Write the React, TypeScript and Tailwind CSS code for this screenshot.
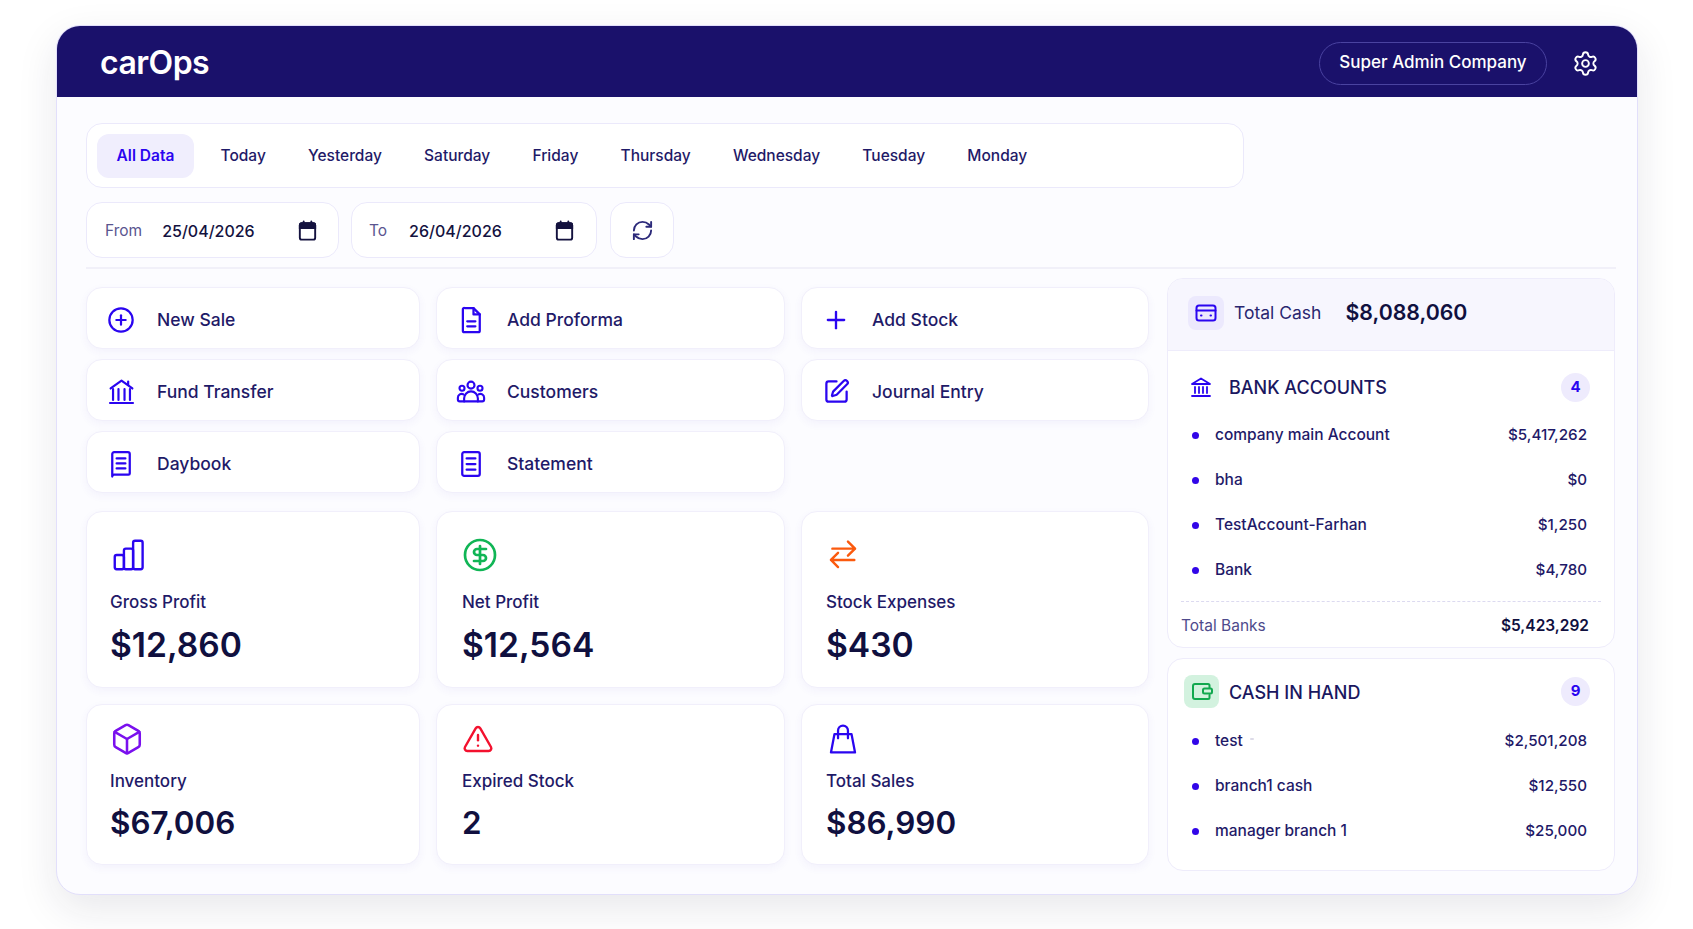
import { CircleDollarSign, Box, TriangleAlert, Plus, CirclePlus, SquarePen, RefreshCw, Settings } from "lucide-react";
import type { ReactNode } from "react";

const tabs = ["Today", "Yesterday", "Saturday", "Friday", "Thursday", "Wednesday", "Tuesday", "Monday"];

const BLUE = "#2a05f0";

function Glyph({ size, children, color = BLUE, sw = 2 }: { size: number; children: ReactNode; color?: string; sw?: number }) {
  return (
    <svg width={size} height={size} viewBox="0 0 24 24" fill="none" stroke={color} strokeWidth={sw} strokeLinecap="round" strokeLinejoin="round">
      {children}
    </svg>
  );
}

const FundIcon = () => (
  <Glyph size={29} sw={1.8}>
    <path d="M3 9.500 12 3l9 6.500" />
    <path d="M17.500 6.500V3.800" />
    <path d="M5 10v9M9.500 10v9M14.500 10v9M19 10v9" />
    <path d="M2.500 21.500h19" />
  </Glyph>
);

const DocIcon = () => (
  <Glyph size={30} sw={1.8}>
    <path d="M7 2.500h7l5 5v13a1.200 1.200 0 0 1-1.200 1.200H6.700a1.200 1.200 0 0 1-1.200-1.200v-17a1 1 0 0 1 1.500-1z" />
    <path d="M14 2.500v5h5" />
    <path d="M9 13h6.500M9 17h6.500" />
  </Glyph>
);

const PeopleIcon = () => (
  <Glyph size={30} sw={1.7}>
    <circle cx="12" cy="6.500" r="2.800" />
    <circle cx="4.800" cy="9" r="2" />
    <circle cx="19.200" cy="9" r="2" />
    <path d="M6.500 19.500v-2.500a5.500 5.500 0 0 1 11 0v2.500z" />
    <path d="M6.500 19.500H3a1.500 1.500 0 0 1-1.500-1.500v-1.500a3 3 0 0 1 4.500-2.600" />
    <path d="M17.500 19.500H21a1.500 1.500 0 0 0 1.500-1.500v-1.500a3 3 0 0 0-4.500-2.600" />
  </Glyph>
);

const DaybookIcon = () => (
  <Glyph size={30} sw={1.8}>
    <path d="M5 22V4a1.500 1.500 0 0 1 1.500-1.500h11A1.500 1.500 0 0 1 19 4v15.500a1 1 0 0 1-1 1H6.500A1.500 1.500 0 0 0 5 22z" />
    <path d="M8.500 7.500h7M8.500 11.500h7M8.500 15.500h7" />
  </Glyph>
);

const StatementIcon = () => (
  <Glyph size={30} sw={1.8}>
    <rect x="5" y="2.500" width="14" height="19" rx="1.500" />
    <path d="M8.500 7.500h7M8.500 12h7M8.500 16.500h7" />
  </Glyph>
);

const BarsIcon = () => (
  <Glyph size={38} sw={1.5}>
    <rect x="3" y="12" width="5.800" height="9" rx="1.200" />
    <rect x="8.800" y="8" width="5.800" height="13" rx="1.200" />
    <rect x="14.600" y="3" width="6" height="18" rx="1.200" />
  </Glyph>
);

const SwapIcon = () => (
  <Glyph size={34} color="#fb5a0e" sw={1.7}>
    <path d="M4.500 7.500h16M15.500 2.500l5 5-5 5" />
    <path d="M20 15.500H3.500M8.500 10.500l-5 5 5 5" />
  </Glyph>
);

const BagIcon = () => (
  <Glyph size={34} sw={1.6}>
    <path d="M6 8.500h12l2.500 13h-17z" />
    <path d="M8.500 11.500V6a3.500 3.500 0 0 1 7 0v5.500" />
  </Glyph>
);

const DateIcon = () => (
  <svg width={23} height={23} viewBox="0 0 24 24" fill="none" stroke="#14123f" strokeWidth={2} strokeLinecap="round">
    <rect x="4" y="4.500" width="16" height="17" rx="2" />
    <path d="M4 6.500a2 2 0 0 1 2-2h12a2 2 0 0 1 2 2v3H4z" fill="#14123f" />
    <path d="M8 2.500v3M16 2.500v3" />
  </svg>
);

const CardIcon = () => (
  <Glyph size={24} sw={2}>
    <rect x="2.500" y="4.500" width="19" height="15" rx="2.500" />
    <path d="M2.500 9.500h19" />
    <path d="M7 14.500h.5M16.500 14.500h.5" />
  </Glyph>
);

const BankIcon = () => (
  <Glyph size={24} sw={1.8}>
    <path d="M3 9 12 3.500 21 9z" />
    <path d="M6 12v6M10 12v6M14 12v6M18 12v6" />
    <path d="M3 21h18" />
  </Glyph>
);

const WalletIcon = () => (
  <Glyph size={24} color="#12a84f" sw={2}>
    <path d="M19.500 9V6.500a1.500 1.500 0 0 0-1.500-1.500H5a2 2 0 0 0-2 2v11a2 2 0 0 0 2 2h13a1.500 1.500 0 0 0 1.500-1.500V16" />
    <rect x="13" y="9.500" width="9" height="5" rx="1.500" />
  </Glyph>
);

function ActionCard({ icon, label }: { icon: ReactNode; label: string }) {
  return (
    <div className="flex h-[62px] items-center rounded-2xl border border-[#f1effb] bg-white shadow-[0_3px_8px_rgba(70,60,200,0.05)]">
      <div className="flex w-[68px] shrink-0 justify-center pt-[4px]">{icon}</div>
      <span className="ml-[2px] pt-[6px] text-[17.5px] font-[450] text-[#1f1a68]">{label}</span>
    </div>
  );
}

function StatCard({ icon, label, value, big, inset = "pl-[23px]" }: { icon: ReactNode; label: string; value: string; big?: boolean; inset?: string }) {
  return (
    <div className={`flex flex-col rounded-2xl border border-[#f1effb] bg-white shadow-[0_3px_8px_rgba(70,60,200,0.05)] ${inset}`}>
      <div className={big ? "mt-[26px] flex h-[34px] items-center" : "mt-[17px] flex h-[34px] items-center"}>{icon}</div>
      <span className={big ? "mt-[18px] text-[17px] font-[450] leading-[24px] text-[#1f1a68]" : "mt-[13px] text-[17px] font-[450] leading-[24px] text-[#1f1a68]"}>{label}</span>
      <span className={big ? "mt-[9px] text-[33.6px] font-semibold leading-[44px] text-[#10103f]" : "mt-[9px] text-[31.4px] font-semibold leading-[42px] text-[#10103f]"}>{value}</span>
    </div>
  );
}

function AccountRow({ name, amount, extra }: { name: string; amount: string; extra?: boolean }) {
  return (
    <div className="flex h-[45px] items-center pl-[24px] pr-[27px]">
      <span className="h-[7px] w-[7px] rounded-full bg-[#3206e8]" />
      <span className="ml-[16px] text-[15.5px] font-[450] text-[#1f1a68]">{name}</span>
      {extra && <span className="ml-[7px] mb-[4px] h-[2px] w-[4px] rounded-full bg-[#dddbe8]" />}
      <span className="ml-auto text-[15.2px] font-[450] text-[#1f1a68]">{amount}</span>
    </div>
  );
}

function CountBadge({ n }: { n: number }) {
  return (
    <span className="flex h-[29px] w-[29px] items-center justify-center rounded-full bg-[#eeebfd] text-[15px] font-bold text-[#2a05f0]">{n}</span>
  );
}

export default function App() {
  return (
    <div className="h-[929px] w-[1693px] overflow-hidden bg-white pl-[56px] pt-[25px] font-[Inter,sans-serif]">
      <div className="h-[870px] w-[1582px] overflow-hidden rounded-[24px] border-[1.5px] border-[#e2dffb] bg-[#fcfcff] shadow-[0_14px_40px_rgba(30,30,60,0.10)]">
        {/* Top bar */}
        <header className="flex h-[71px] items-center bg-[#1a116b] pl-[43px] pr-[32px] pt-[3px]">
          <span className="text-[32px] font-semibold tracking-[-0.5px] text-white">carOps</span>
          <div className="ml-auto flex h-[43px] w-[228px] items-center justify-center rounded-full border border-[#4a43a0] text-[17px] font-[450] text-white">
            Super Admin Company
          </div>
          <Settings className="ml-[25px] mr-[6px] text-white" size={27} strokeWidth={1.7} />
        </header>

        <div className="pl-[29px] pr-[21px] pt-[26px]">
          {/* Day tabs */}
          <div className="flex h-[65px] w-[1158px] items-center rounded-2xl border-[1.5px] border-[#ebe9fb] bg-white pl-[10px]">
            <div className="flex h-[44px] w-[97px] items-center justify-center rounded-xl bg-[#f0eefd] text-[15.5px] font-semibold text-[#2a05f0]">
              All Data
            </div>
            <div className="ml-[6px] flex items-center gap-[1.2px]">
              {tabs.map((t) => (
                <span key={t} className="px-[20.500px] text-[15.5px] font-[450] text-[#1f1a68]">{t}</span>
              ))}
            </div>
          </div>

          {/* Date filter */}
          <div className="mt-[14px] flex items-center">
            <div className="flex h-[56px] w-[253px] items-center rounded-2xl border-[1.5px] border-[#ebe9fb] bg-white pl-[18px] pr-[19px]">
              <span className="pt-[2px] text-[15.5px] text-[#5a5590]">From</span>
              <span className="ml-[20px] pt-[2px] text-[16px] font-[450] text-[#14123f]">25/04/2026</span>
              <span className="ml-auto"><DateIcon /></span>
            </div>
            <div className="ml-[12px] flex h-[56px] w-[246px] items-center rounded-2xl border-[1.5px] border-[#ebe9fb] bg-white pl-[17px] pr-[20px]">
              <span className="pt-[2px] text-[15.5px] text-[#5a5590]">To</span>
              <span className="ml-[22px] pt-[2px] text-[16px] font-[450] text-[#14123f]">26/04/2026</span>
              <span className="ml-auto"><DateIcon /></span>
            </div>
            <div className="ml-[13px] flex h-[56px] w-[64px] items-center justify-center rounded-2xl border-[1.5px] border-[#ebe9fb] bg-white">
              <RefreshCw className="text-[#2c2a7a]" size={23} strokeWidth={2} />
            </div>
          </div>

          <div className="mt-[9px] h-[1.5px] bg-[#f1f0f9]" />

          <div className="mt-[9px] flex items-start gap-[18px]">
            {/* Actions and stats */}
            <div className="w-[1063px] pt-[9px]">
              <div className="grid grid-cols-[334px_349px_348px] gap-x-[16px] gap-y-[10px]">
                <ActionCard icon={<CirclePlus size={28} color={BLUE} strokeWidth={1.9} />} label="New Sale" />
                <ActionCard icon={<DocIcon />} label="Add Proforma" />
                <ActionCard icon={<Plus size={28} color={BLUE} strokeWidth={2} />} label="Add Stock" />
                <ActionCard icon={<FundIcon />} label="Fund Transfer" />
                <ActionCard icon={<PeopleIcon />} label="Customers" />
                <ActionCard icon={<SquarePen size={27} color={BLUE} strokeWidth={2} />} label="Journal Entry" />
                <ActionCard icon={<DaybookIcon />} label="Daybook" />
                <ActionCard icon={<StatementIcon />} label="Statement" />
              </div>
              <div className="mt-[18px] grid grid-cols-[334px_349px_348px] grid-rows-[177px_161px] gap-x-[16px] gap-y-[16px]">
                <StatCard big icon={<BarsIcon />} label="Gross Profit" value="$12,860" />
                <StatCard big inset="pl-[25px]" icon={<CircleDollarSign size={36} color="#10b555" strokeWidth={1.8} />} label="Net Profit" value="$12,564" />
                <StatCard big inset="pl-[24px]" icon={<SwapIcon />} label="Stock Expenses" value="$430" />
                <StatCard icon={<Box size={34} color="#7a10ee" strokeWidth={1.8} />} label="Inventory" value="$67,006" />
                <StatCard inset="pl-[25px]" icon={<TriangleAlert size={32} color="#f3112e" strokeWidth={1.8} />} label="Expired Stock" value="2" />
                <StatCard inset="pl-[24px]" icon={<BagIcon />} label="Total Sales" value="$86,990" />
              </div>
            </div>

            {/* Balances */}
            <div className="w-[448px]">
              <div className="h-[370px] overflow-hidden rounded-2xl border-[1.5px] border-[#eeecfb] bg-white">
                <div className="flex h-[72px] items-center border-b-[1.5px] border-[#eeecfb] bg-[#f7f6fe] pb-[2px] pl-[20px]">
                  <div className="flex h-[34px] w-[36px] items-center justify-center rounded-lg bg-[#ece9fd]">
                    <CardIcon />
                  </div>
                  <span className="ml-[10px] text-[17.5px] text-[#2a2670]">Total Cash</span>
                  <span className="ml-[24px] text-[21.3px] font-semibold text-[#10103f]">$8,088,060</span>
                </div>
                <div className="flex h-[73px] items-center pl-[21px] pr-[24px]">
                  <BankIcon />
                  <span className="ml-[16px] text-[18px] font-[450] text-[#1a1760]">BANK ACCOUNTS</span>
                  <span className="ml-auto"><CountBadge n={4} /></span>
                </div>
                <div className="-mt-[11px]">
                  <AccountRow name="company main Account" amount="$5,417,262" />
                  <AccountRow name="bha" amount="$0" />
                  <AccountRow name="TestAccount-Farhan" amount="$1,250" />
                  <AccountRow name="Bank" amount="$4,780" />
                </div>
                <div className="mx-[13px] mt-[8px] border-t-[1.5px] border-dashed border-[#dcdaf0]" />
                <div className="flex h-[49px] items-center pl-[13px] pr-[25px]">
                  <span className="text-[15.5px] text-[#4e4a8c]">Total Banks</span>
                  <span className="ml-auto text-[15.5px] font-semibold text-[#10103f]">$5,423,292</span>
                </div>
              </div>

              <div className="mt-[10px] h-[213px] rounded-2xl border-[1.5px] border-[#eeecfb] bg-white">
                <div className="flex items-center pl-[16px] pr-[24px] pt-[16px]">
                  <div className="flex h-[33px] w-[35px] items-center justify-center rounded-lg bg-[#d3f2df]">
                    <WalletIcon />
                  </div>
                  <span className="ml-[10px] pt-[2px] text-[18px] font-[450] text-[#1a1760]">CASH IN HAND</span>
                  <span className="ml-auto"><CountBadge n={9} /></span>
                </div>
                <div className="mt-[11px]">
                  <AccountRow name="test" amount="$2,501,208" extra />
                  <AccountRow name="branch1 cash" amount="$12,550" />
                  <AccountRow name="manager branch 1" amount="$25,000" />
                </div>
              </div>
            </div>
          </div>
        </div>
      </div>
    </div>
  );
}
